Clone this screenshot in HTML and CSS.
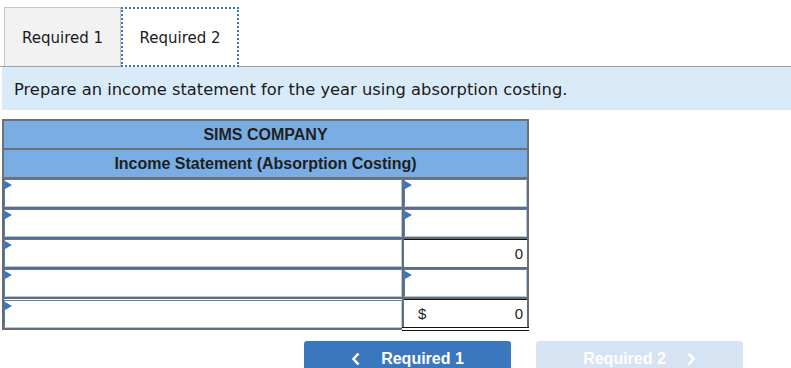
FILE: index.html
```html
<!DOCTYPE html>
<html lang="en">
<head>
    <meta charset="UTF-8">
    <title>Income Statement</title>
    <link rel="stylesheet" href="styles.css">
</head>
<body>
    <div class="tabs">
        <div class="tab">Required 1</div>
        <div class="tab active">Required 2</div>
    </div>
    <div class="info">Prepare an income statement for the year using absorption costing.</div>

    <table class="stmt">
        <tr><th colspan="2">SIMS COMPANY</th></tr>
        <tr><th colspan="2">Income Statement (Absorption Costing)</th></tr>
        <tr>
            <td class="label"><div class="field drop"></div></td>
            <td class="amt"><div class="field drop"></div></td>
        </tr>
        <tr>
            <td class="label"><div class="field drop"></div></td>
            <td class="amt"><div class="field drop"></div></td>
        </tr>
        <tr>
            <td class="label"><div class="field drop"></div></td>
            <td class="amt calc"><span></span><span>0</span></td>
        </tr>
        <tr>
            <td class="label"><div class="field drop"></div></td>
            <td class="amt"><div class="field drop"></div></td>
        </tr>
        <tr>
            <td class="label"><div class="field drop"></div></td>
            <td class="amt calc total"><span>$</span><span>0</span></td>
        </tr>
    </table>

    <div class="nav">
        <button class="btn prev">
            <svg width="10" height="14" viewBox="0 0 10 14"><polyline points="7.5,1.5 2.5,7 7.5,12.5" fill="none" stroke="#fff" stroke-width="2.6"/></svg>
            <span>Required 1</span>
        </button>
        <button class="btn next">
            <span>Required 2</span>
            <svg width="10" height="14" viewBox="0 0 10 14"><polyline points="2.5,1.5 7.5,7 2.5,12.5" fill="none" stroke="#fff" stroke-width="2.6"/></svg>
        </button>
    </div>
</body>
</html>
```

FILE: styles.css
```css
body {
    margin: 0;
    font-family: "DejaVu Sans", Verdana, sans-serif;
    color: #1a1a1a;
    background-color: #ffffff;
}

.tabs {
    display: flex;
    padding: 7px 0 0 4px;
    border-bottom: 1px solid #a0a0a0;
}

.tab {
    width: 115px;
    height: 58px;
    line-height: 60px;
    text-align: center;
    font-size: 15px;
    background-color: #f2f2f2;
    border: 1px solid #c6c6c6;
    border-bottom: none;
}

.tab.active {
    width: 114px;
    height: 56px;
    line-height: 58px;
    background-color: #ffffff;
    border: 2px dotted #3f74b6;
    margin-bottom: -1px;
}

.info {
    margin-left: 2px;
    height: 43px;
    line-height: 46px;
    padding-left: 12px;
    font-size: 16.3px;
    background-color: #d9ebf9;
}

.stmt {
    margin: 9px 0 0 2px;
    width: 527px;
    border-collapse: collapse;
    font-family: "Liberation Sans", Arial, sans-serif;
}

.stmt th {
    height: 27px;
    padding: 0;
    font-size: 16px;
    font-weight: bold;
    color: #1f1f1f;
    background-color: #79ade3;
    border: 2px solid #707070;
}

.stmt td {
    height: 28px;
    padding: 0;
    border: 2px solid #6b6b6b;
}

.stmt .label {
    width: 398px;
}

.field {
    position: relative;
    height: 26px;
    border: 1px solid #4a7dc2;
    border-bottom-color: #a9c9ee;
    border-right-color: #a9c9ee;
    background-color: #ffffff;
}

.drop::before {
    content: "";
    position: absolute;
    left: 0;
    top: 1px;
    border-top: 4px solid transparent;
    border-bottom: 4px solid transparent;
    border-left: 7px solid #3b74bd;
}

.stmt td.calc {
    font-size: 15px;
    color: #222;
    line-height: 26px;
    padding: 2px 4px 0 14px;
    height: 26px;
    box-shadow: inset 0 1px 0 #111;
}

.calc span {
    display: inline-block;
}

.calc span:last-child {
    float: right;
}

.stmt td.total {
    border-bottom: 4px double #111;
    height: 24px;
}

.nav {
    display: flex;
    gap: 25px;
    margin: 10px 0 0 304px;
}

.btn {
    display: flex;
    align-items: center;
    justify-content: center;
    gap: 20px;
    width: 207px;
    height: 36px;
    padding: 0;
    border: none;
    border-radius: 3px;
    font-family: "Liberation Sans", Arial, sans-serif;
    font-size: 16px;
    font-weight: bold;
    color: #ffffff;
    cursor: pointer;
}

.prev {
    background-color: #3a77bd;
}

.next {
    background-color: #d6e3f2;
}
```
